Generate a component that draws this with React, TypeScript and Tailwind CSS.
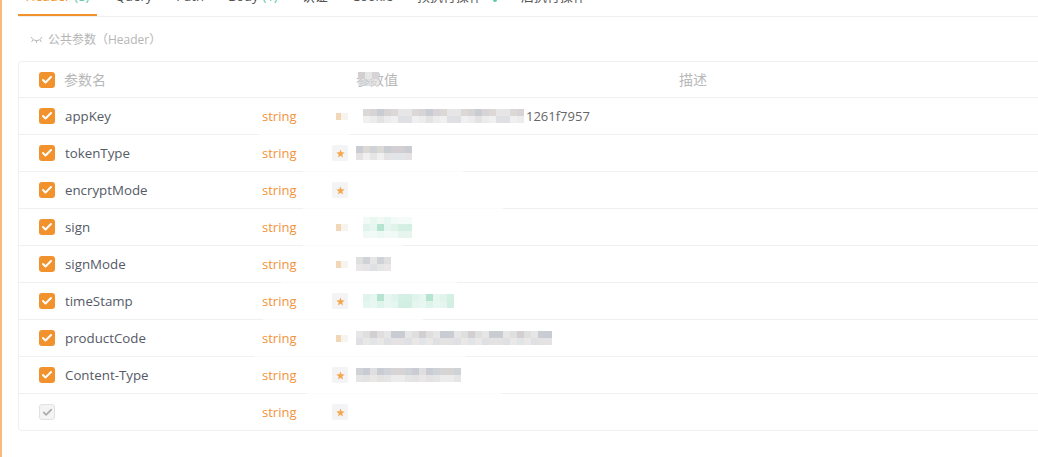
import { Check } from 'lucide-react';

const font = { fontFamily: '"Open Sans", "Noto Sans CJK SC", sans-serif' };

const tabs = [
  { label: 'Header', count: '(8)', active: true },
  { label: 'Query' },
  { label: 'Path' },
  { label: 'Body', count: '(1)' },
  { label: '认证' },
  { label: 'Cookie' },
  { label: '预执行操作', dot: true },
  { label: '后执行操作' },
];

const grays = ['#d2ced1', '#dfdfe0', '#c9ccd2', '#d6d4d4', '#e6e6e6', '#cfd3d8', '#dbd8d6'];
const greens = ['#d4efe4', '#bfe8d6', '#e0f4ec', '#c8ebdc', '#d9f1e8', '#b6e4d0', '#e6f6f0'];

// fake pixelated block, cells are 7px like the source mosaic
function Mosaic({ cells, rows = 2, green, offset = 0 }: { cells: number; rows?: number; green?: boolean; offset?: number }) {
  const tones = green ? greens : grays;
  return (
    <span className="flex flex-col">
      {Array.from({ length: rows }).map((_, y) => (
        <span key={y} className="flex">
          {Array.from({ length: cells }).map((_, x) => {
            const tone = tones[(x * 3 + y * 5 + x * x + offset) % tones.length];
            const fade = rows === 3 ? (y === 1 ? 1 : 0.35) : y === 0 ? 1 : 0.6;
            return <span key={x} className="h-[7px] w-[7px]" style={{ background: tone, opacity: fade }} />;
          })}
        </span>
      ))}
    </span>
  );
}

const rows = [
  { name: 'appKey', star: false, start: 'ml-[15px]', cells: 23, mosaicRows: 2, tail: '1261f7957', line: 'left-[240px] w-[90px]' },
  { name: 'tokenType', star: true, start: 'ml-[8px]', cells: 8, mosaicRows: 2, line: 'left-[284px] w-[160px]' },
  { name: 'encryptMode', star: true, line: 'left-[284px] w-[200px]' },
  { name: 'sign', star: false, start: 'ml-[15px]', cells: 7, mosaicRows: 3, green: true, line: 'left-[284px] w-[100px]' },
  { name: 'signMode', star: false, start: 'ml-[8px]', cells: 5, mosaicRows: 2, line: 'left-[262px] w-[176px]' },
  { name: 'timeStamp', star: true, start: 'ml-[15px]', cells: 13, mosaicRows: 2, green: true, line: 'left-[244px] w-[160px]' },
  { name: 'productCode', star: false, start: 'ml-[8px]', cells: 28, mosaicRows: 2, line: 'left-[235px] w-[212px]' },
  { name: 'Content-Type', star: true, start: 'ml-[8px]', cells: 15, mosaicRows: 2, line: 'left-[288px] w-[194px]' },
];

function Box({ muted }: { muted?: boolean }) {
  if (muted) {
    return (
      <span className="flex h-4 w-4 shrink-0 items-center justify-center rounded-[3px] border border-[#e1e1e1] bg-[#f4f4f4]">
        <Check size={11} strokeWidth={4} className="text-[#b0b0b0]" />
      </span>
    );
  }
  return (
    <span className="flex h-4 w-4 shrink-0 items-center justify-center rounded-[3px] bg-[#f2922c]">
      <Check size={12} strokeWidth={4} className="text-white" />
    </span>
  );
}

function Star({ hidden }: { hidden?: boolean }) {
  if (hidden) {
    return (
      <span className="flex h-4 w-4 shrink-0 items-center justify-start pl-[4px]">
        <span className="h-[7px] w-[7px] bg-[#f3d6b6]" />
        <span className="h-[7px] w-[7px] shrink-0 bg-[#f7f3ee]" />
      </span>
    );
  }
  return (
    <span className="flex h-4 w-4 shrink-0 items-center justify-center rounded-[2px] bg-[#f4f4f6]">
      <svg width="9" height="9" viewBox="0 0 10 10" fill="#f3a84e">
        <path d="M5 .5 6.200 3.700 9.700 3.800 6.900 6 7.900 9.400 5 7.400 2.100 9.400 3.100 6 .3 3.800 3.800 3.700z" />
      </svg>
    </span>
  );
}

export default function App() {
  return (
    <div className="h-[457px] w-[1038px] overflow-hidden border-l-2 border-[#f6bb7c] bg-white" style={font}>
      <div className="ml-[16px] flex h-[17px] items-end gap-[24px] border-b border-[#f0f0f0] text-[13px] text-[#555]">
        {tabs.map((t) => (
          <div
            key={t.label}
            className={`flex h-[17px] shrink-0 items-end whitespace-nowrap leading-none ${
              t.active ? 'mr-[-6px] w-[79px] justify-center border-b-2 border-[#f2922c] text-[#f2922c]' : ''
            }`}
          >
            <span className={t.active ? 'pb-[11px]' : 'pb-[13px]'}>{t.label}</span>
            {t.count && <span className={`pl-1 text-[#5fc9a2] ${t.active ? 'pb-[11px]' : 'pb-[13px]'}`}>{t.count}</span>}
            {t.dot && <span className="mb-[14px] ml-[11px] h-1 w-1 rounded-full bg-[#5fc9a2]" />}
          </div>
        ))}
      </div>

      <div className="ml-[16px] mt-[15px] flex h-[16px] items-center gap-[5px] pl-[12px] text-[12px] text-[#b5b5b5]">
        <svg width="13" height="8" viewBox="0 0 13 8" fill="none" stroke="#b5b5b5" strokeWidth="1">
          <path d="M1 1c1.500 2.500 3 3.500 5.500 3.500S10.500 3.500 12 1M3 4 1.500 6M6.500 4.500V7M10 4l1.500 2" />
        </svg>
        <span>公共参数（Header）</span>
      </div>

      <div className="ml-[16px] mt-[13px] rounded-l-[4px] border border-r-0 border-[#f0f0f0] text-[13.3px]">
        <div className="relative flex h-[36px] items-center border-b border-[#f0f0f0] pl-[20px] text-[14px] text-[#b8b8b8]">
          <Box />
          <span className="ml-[9px] w-[292px]">参数名</span>
          <span className="relative w-[323px]">
            参数值
            <span className="absolute left-[2px] top-[3px]">
              <Mosaic cells={3} rows={2} />
            </span>
          </span>
          <span>描述</span>
        </div>
        {rows.map((r) => (
          <div key={r.name} className="relative flex h-[37px] items-center border-b border-[#f0f0f0] pl-[20px]">
            <Box />
            <span className="ml-[10px] w-[197px] pt-[2px] text-[#555a66]">{r.name}</span>
            <span className="w-[70px] pt-[2px] text-[13px] text-[#f2923a]">string</span>
            <Star hidden={!r.star} />
            {r.cells && (
              <span className={`flex items-center ${r.start}`}>
                <Mosaic cells={r.cells} rows={r.mosaicRows} green={r.green} offset={r.name.length} />
                {r.tail && <span className="ml-[2px] pt-[2px] text-[13px] text-[#666]">{r.tail}</span>}
              </span>
            )}
            <span className={`absolute bottom-[-1px] h-px bg-[#fbfbfb] ${r.line}`} />
          </div>
        ))}
        <div className="flex h-[36px] items-center pl-[20px]">
          <Box muted />
          <span className="ml-[10px] w-[197px]" />
          <span className="w-[70px] pt-[2px] text-[13px] text-[#f2923a]">string</span>
          <Star />
        </div>
      </div>
    </div>
  );
}
